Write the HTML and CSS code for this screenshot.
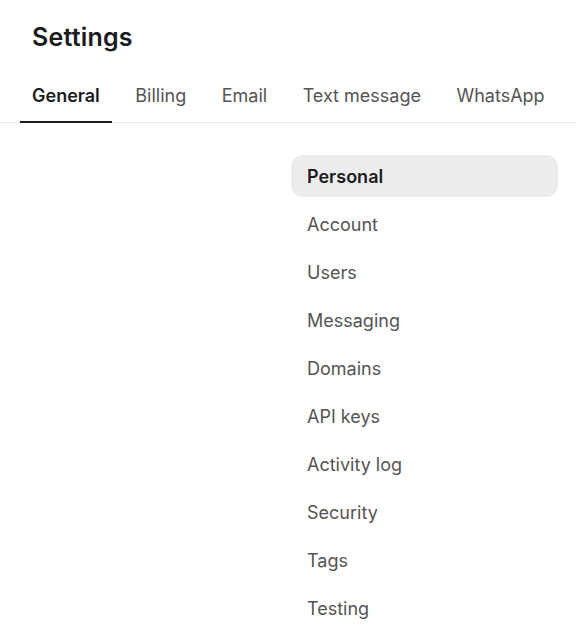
FILE: index.html
```html
<!DOCTYPE html>
<html lang="en">
<head>
<meta charset="utf-8">
<title>Settings</title>
<link rel="stylesheet" href="styles.css">
</head>
<body>
<header class="header">
  <h1 class="title">Settings</h1>
  <nav class="tabs">
    <a class="tab tab-active" href="#">General</a>
    <a class="tab" href="#">Billing</a>
    <a class="tab" href="#">Email</a>
    <a class="tab" href="#">Text message</a>
    <a class="tab" href="#">WhatsApp</a>
  </nav>
</header>
<main class="content">
  <div class="main-pane"></div>
  <ul class="side-menu">
    <li class="menu-item menu-item-active">Personal</li>
    <li class="menu-item">Account</li>
    <li class="menu-item">Users</li>
    <li class="menu-item">Messaging</li>
    <li class="menu-item">Domains</li>
    <li class="menu-item">API keys</li>
    <li class="menu-item">Activity log</li>
    <li class="menu-item">Security</li>
    <li class="menu-item">Tags</li>
    <li class="menu-item">Testing</li>
  </ul>
</main>
</body>
</html>
```

FILE: styles.css
```css
* { box-sizing: border-box; }
html, body { margin: 0; padding: 0; background: #ffffff; }
body {
  font-family: Inter, "Noto Sans", "Liberation Sans", sans-serif;
  color: #1c1c1e;
  overflow: hidden;
}
.header { padding-top: 21px; }
.title {
  margin: 0;
  padding-left: 32px;
  font-size: 25px;
  line-height: 32px;
  font-weight: 600;
  letter-spacing: 0.2px;
  color: #1c1c1e;
}
.tabs {
  display: flex;
  gap: 11.5px;
  margin-top: 19px;
  padding-left: 20px;
  border-bottom: 1px solid #ebebeb;
  white-space: nowrap;
}
.tab {
  display: block;
  padding: 12px 12px 13px;
  margin-bottom: -1px;
  border-bottom: 2px solid transparent;
  font-size: 18px;
  line-height: 24px;
  color: #545454;
  text-decoration: none;
}
.tab-active {
  color: #1c1c1e;
  font-weight: 600;
  border-bottom-color: #1c1c1e;
}
.content {
  display: grid;
  grid-template-columns: 1fr 267px;
  padding: 32px 18px 0 0;
}
.side-menu {
  list-style: none;
  margin: 0;
  padding: 0;
  display: flex;
  flex-direction: column;
  gap: 6px;
}
.menu-item {
  height: 42px;
  line-height: 44px;
  padding: 0 16px;
  font-size: 18px;
  color: #545454;
  border-radius: 12px;
}
.menu-item-active {
  background: #ececee;
  color: #1c1c1e;
  font-weight: 600;
}
```
